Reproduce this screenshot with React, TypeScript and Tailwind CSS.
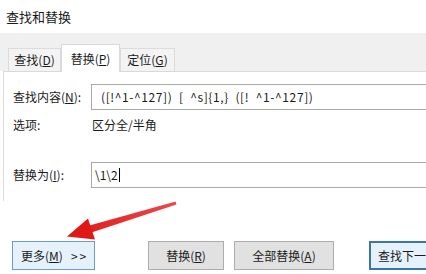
import React from 'react';

const font = { fontFamily: '"Noto Sans CJK SC", "Noto Sans", sans-serif' };

const Tab: React.FC<{ label: string; hot: string; w: string; active?: boolean }> = ({ label, hot, w, active }) => (
  <div
    className={
      active
        ? `h-[28px] ${w} flex items-center justify-center bg-white border border-b-0 border-[#d9d9d9] -mb-px relative z-10`
        : `h-[23px] ${w} flex items-center justify-center bg-[#f3f3f3] border border-b-0 border-[#dcdcdc]`
    }
  >
    <span>
      {label}(<span className="underline">{hot}</span>)
    </span>
  </div>
);

const Btn: React.FC<{ className: string; children: React.ReactNode }> = ({ className, children }) => (
  <div className={`h-[29px] shrink-0 flex items-center ${className}`}>{children}</div>
);

export default function App() {
  return (
    <div className="relative w-[426px] h-[274px] overflow-hidden bg-white text-[12px] text-[#1b1b1b]" style={font}>
      <div className="h-[33px] pl-[6px] flex items-center text-[13px]">查找和替换</div>

      <div className="h-[38px] bg-[#f0f0f0] flex items-end pl-[8px]">
        <Tab label="查找" hot="D" w="w-[53px]" />
        <Tab label="替换" hot="P" w="w-[59px]" active />
        <Tab label="定位" hot="G" w="w-[55px]" />
      </div>

      <div className="ml-[3px] h-[130px] border-l border-t border-[#d9d9d9] bg-white pt-[12px]">
        <div className="flex items-center h-[26px]">
          <div className="w-[87px] shrink-0 pl-[9px]">
            查找内容(<span className="underline">N</span>):
          </div>
          <div className="flex-1 h-[26px] border border-r-0 border-[#a9a9a9] flex items-center pl-[9px] whitespace-pre tracking-[0.6px]">
            {'([!^1-^127])  [  ^s]{1,}  ([!  ^1-^127])'}
          </div>
        </div>
        <div className="flex items-center h-[30px]">
          <div className="w-[87px] shrink-0 pl-[9px]">选项:</div>
          <div className="pl-px">区分全/半角</div>
        </div>
        <div className="flex items-center h-[26px] mt-[22px]">
          <div className="w-[87px] shrink-0 pl-[9px]">
            替换为(<span className="underline">I</span>):
          </div>
          <div className="flex-1 h-[26px] border border-r-0 border-[#a9a9a9] flex items-center pl-[3px]">
            \1\2<span className="ml-px inline-block w-px h-[14px] bg-black" />
          </div>
        </div>
      </div>

      <div className="flex items-center mt-[40px] pl-[12px]">
        <Btn className="w-[83px] pl-[8px] bg-[#e5f1fb] border border-[#6f9cc0]">
          更多(<span className="underline">M</span>)<span className="ml-[8px] tracking-[2px]">&gt;&gt;</span>
        </Btn>
        <Btn className="ml-[53px] w-[76px] justify-center bg-[#e1e1e1] border border-[#adadad]">
          替换(<span className="underline">R</span>)
        </Btn>
        <Btn className="ml-[10px] w-[100px] justify-center bg-[#e1e1e1] border border-[#adadad]">
          全部替换(<span className="underline">A</span>)
        </Btn>
        <Btn className="ml-[35px] w-[80px] pl-[7px] bg-[#e5f1fb] border-2 border-[#3a76a8] whitespace-nowrap">
          查找下一处(<span className="underline">F</span>)
        </Btn>
      </div>

      <svg className="absolute left-0 top-0 pointer-events-none" width="426" height="274">
        <defs>
          <linearGradient id="arr" x1="176" y1="203" x2="68" y2="236" gradientUnits="userSpaceOnUse">
            <stop offset="0" stopColor="#e84a4a" />
            <stop offset="1" stopColor="#e01818" />
          </linearGradient>
        </defs>
        <polygon points="88.5,225.8 91.5,232.4 176.4,204.4 175.6,201.6" fill="url(#arr)" />
        <polygon points="67,236.5 95,239.5 88,218.5" fill="#e01818" />
      </svg>
    </div>
  );
}
